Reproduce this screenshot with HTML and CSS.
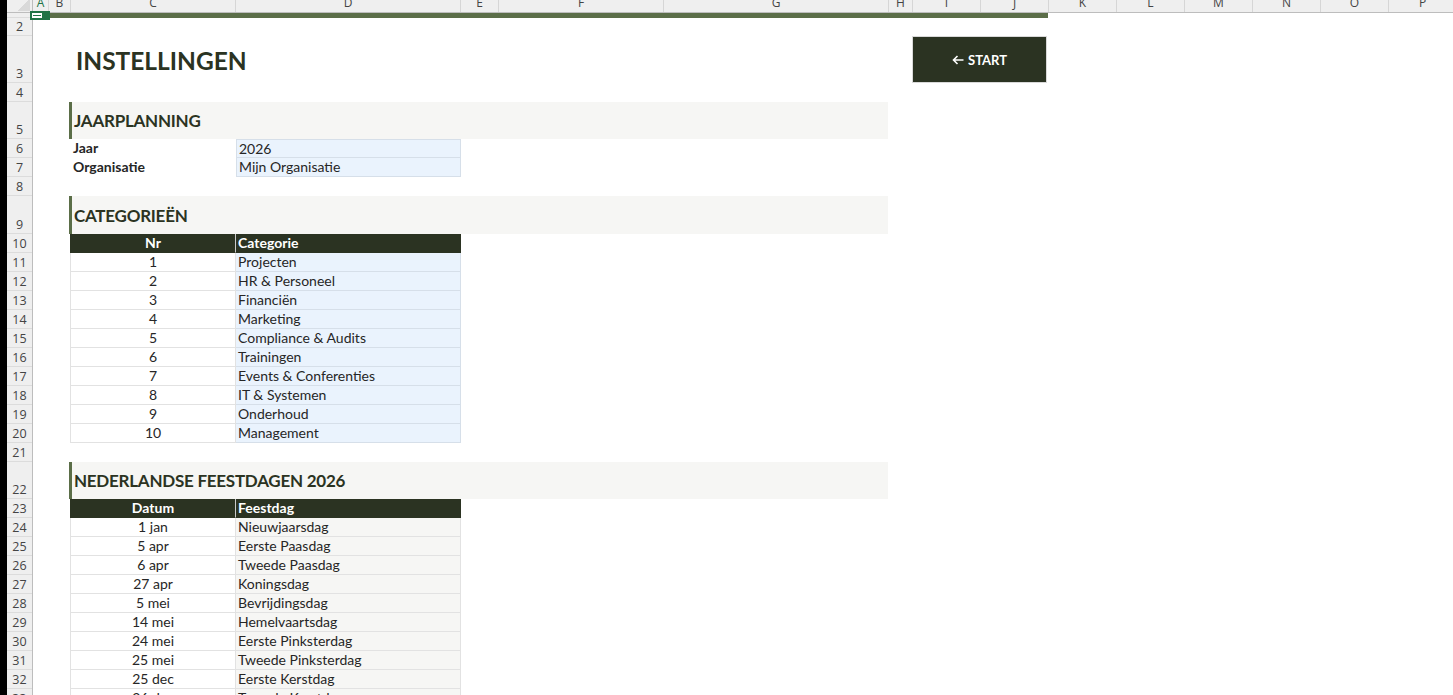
FILE: index.html
```html
<!DOCTYPE html>
<html lang="nl">

<head>
    <meta charset="UTF-8">
    <meta name="viewport" content="width=device-width, initial-scale=1.0">
    <title>Instellingen</title>
    <link rel="stylesheet" href="styles.css">
</head>

<body>
    <div class="edge"></div>
    <div class="app">
        <div class="cursor"><span></span></div>

        <div class="colheads">
            <div class="corner"></div>
            <div class="ch w-a sel">A</div>
            <div class="ch w-b">B</div>
            <div class="ch w-c">C</div>
            <div class="ch w-d">D</div>
            <div class="ch w-e">E</div>
            <div class="ch w-c">F</div>
            <div class="ch w-d">G</div>
            <div class="ch w-h">H</div>
            <div class="ch w-n">I</div>
            <div class="ch w-n">J</div>
            <div class="ch w-n">K</div>
            <div class="ch w-n">L</div>
            <div class="ch w-n">M</div>
            <div class="ch w-n">N</div>
            <div class="ch w-n">O</div>
            <div class="ch w-n">P</div>
        </div>

        <div class="sheet">
            <div class="rowheads">
                <div class="rh r5"></div>
                <div class="rh r18">2</div>
                <div class="rh r47">3</div>
                <div class="rh">4</div>
                <div class="rh r37">5</div>
                <div class="rh">6</div>
                <div class="rh">7</div>
                <div class="rh">8</div>
                <div class="rh r38">9</div>
                <div class="rh">10</div>
                <div class="rh">11</div>
                <div class="rh">12</div>
                <div class="rh">13</div>
                <div class="rh">14</div>
                <div class="rh">15</div>
                <div class="rh">16</div>
                <div class="rh">17</div>
                <div class="rh">18</div>
                <div class="rh">19</div>
                <div class="rh">20</div>
                <div class="rh">21</div>
                <div class="rh r37">22</div>
                <div class="rh">23</div>
                <div class="rh">24</div>
                <div class="rh">25</div>
                <div class="rh">26</div>
                <div class="rh">27</div>
                <div class="rh">28</div>
                <div class="rh">29</div>
                <div class="rh">30</div>
                <div class="rh">31</div>
                <div class="rh">32</div>
                <div class="rh">33</div>
            </div>

            <div class="canvas">
                <div class="topband"></div>
                <div class="gap r18"></div>

                <div class="titlerow">
                    <h1>INSTELLINGEN</h1>
                    <a class="btn" href="#">
                        <svg width="12" height="10" viewBox="0 0 12 10">
                            <path d="M5.5 1 L1.5 5 L5.5 9 M1.5 5 H11.5" fill="none" stroke="#fff" stroke-width="1.6" />
                        </svg>
                        START
                    </a>
                </div>

                <div class="gap"></div>

                <div class="section"><h2>JAARPLANNING</h2></div>
                <div class="form">
                    <div class="lbl">Jaar</div>
                    <div class="val first">2026</div>
                    <div class="lbl">Organisatie</div>
                    <div class="val">Mijn Organisatie</div>
                </div>

                <div class="gap"></div>

                <div class="section r38"><h2>CATEGORIEËN</h2></div>
                <div class="tbl">
                    <div class="hd n">Nr</div>
                    <div class="hd t">Categorie</div>
                    <div class="n">1</div><div class="t">Projecten</div>
                    <div class="n">2</div><div class="t">HR &amp; Personeel</div>
                    <div class="n">3</div><div class="t">Financiën</div>
                    <div class="n">4</div><div class="t">Marketing</div>
                    <div class="n">5</div><div class="t">Compliance &amp; Audits</div>
                    <div class="n">6</div><div class="t">Trainingen</div>
                    <div class="n">7</div><div class="t">Events &amp; Conferenties</div>
                    <div class="n">8</div><div class="t">IT &amp; Systemen</div>
                    <div class="n">9</div><div class="t">Onderhoud</div>
                    <div class="n">10</div><div class="t">Management</div>
                </div>

                <div class="gap"></div>

                <div class="section"><h2>NEDERLANDSE FEESTDAGEN 2026</h2></div>
                <div class="tbl days">
                    <div class="hd n">Datum</div>
                    <div class="hd t">Feestdag</div>
                    <div class="n">1 jan</div><div class="t">Nieuwjaarsdag</div>
                    <div class="n">5 apr</div><div class="t">Eerste Paasdag</div>
                    <div class="n">6 apr</div><div class="t">Tweede Paasdag</div>
                    <div class="n">27 apr</div><div class="t">Koningsdag</div>
                    <div class="n">5 mei</div><div class="t">Bevrijdingsdag</div>
                    <div class="n">14 mei</div><div class="t">Hemelvaartsdag</div>
                    <div class="n">24 mei</div><div class="t">Eerste Pinksterdag</div>
                    <div class="n">25 mei</div><div class="t">Tweede Pinksterdag</div>
                    <div class="n">25 dec</div><div class="t">Eerste Kerstdag</div>
                    <div class="n">26 dec</div><div class="t">Tweede Kerstdag</div>
                </div>
            </div>
        </div>
    </div>
</body>

</html>
```

FILE: styles.css
```css
* {
    box-sizing: border-box;
}

html,
body {
    margin: 0;
    height: 100%;
}

body {
    display: flex;
    overflow: hidden;
    background-color: #fff;
    font-family: Lato, "Liberation Sans", sans-serif;
    font-size: 14px;
    color: #262626;
}

.edge {
    width: 7px;
    flex-shrink: 0;
    background-color: #000;
}

.app {
    position: relative;
    flex: 1;
    display: flex;
    flex-direction: column;
    min-width: 0;
}

/* column letters */
.colheads {
    display: flex;
    height: 13px;
    flex-shrink: 0;
    overflow: hidden;
    background-color: #efefef;
    border-bottom: 1px solid #bdbdbd;
}

.corner {
    width: 26px;
    flex-shrink: 0;
    border-right: 1px solid #bdbdbd;
    background: linear-gradient(135deg, transparent 50%, #d9d9d9 50%) no-repeat right 2px bottom 1px / 13px 11px;
}

.ch {
    flex-shrink: 0;
    overflow: hidden;
    border-right: 1px solid #d6d6d6;
    text-align: center;
    font: 12px/6px "Open Sans", sans-serif;
    color: #444;
}

.ch.sel {
    color: #217346;
}

.w-a { width: 16px; }
.w-b { width: 22px; }
.w-c { width: 165px; }
.w-d { width: 225px; }
.w-e { width: 38px; }
.w-h { width: 24px; }
.w-n { width: 68px; }

.cursor {
    position: absolute;
    left: 23px;
    top: 11px;
    width: 20px;
    height: 9px;
    background-color: #217346;
}

.cursor span {
    position: absolute;
    left: 2px;
    top: 2px;
    width: 10px;
    height: 5px;
    background-color: #217346;
    border: 1px solid #fff;
    border-width: 2px 1px;
}

/* sheet */
.sheet {
    display: flex;
    flex: 1;
    min-height: 0;
}

.rowheads {
    width: 26px;
    flex-shrink: 0;
    background-color: #efefef;
    border-right: 1px solid #bdbdbd;
}

.rh {
    height: 19px;
    display: flex;
    align-items: flex-end;
    justify-content: center;
    overflow: hidden;
    padding-bottom: 1px;
    border-bottom: 1px solid #dcdcdc;
    font: 12.5px/15px "Open Sans", sans-serif;
    color: #444;
}

.r5 { height: 5px; padding: 0; }
.r18 { height: 18px; }
.r37 { height: 37px; }
.r38 { height: 38px; }
.r47 { height: 47px; }

.canvas {
    flex: 1;
    padding-left: 37px;
}

.topband {
    margin-left: -37px;
    width: 1015px;
    height: 5px;
    background-color: #5b6e48;
}

.gap {
    height: 19px;
}

.gap.r18 {
    height: 18px;
}

.titlerow {
    display: flex;
    height: 47px;
}

h1 {
    width: 842px;
    margin: 0;
    padding: 2px 0 0 6px;
    display: flex;
    align-items: center;
    font-size: 24.5px;
    font-weight: 700;
    color: #2b3322;
}

.btn {
    width: 135px;
    display: flex;
    align-items: center;
    justify-content: center;
    gap: 4px;
    background-color: #2b3322;
    border: 1px solid #d9d9d9;
    color: #fff;
    font-size: 13px;
    font-weight: 700;
    text-decoration: none;
}

.section {
    width: 819px;
    height: 37px;
    margin-left: -1px;
    display: flex;
    align-items: center;
    padding-left: 2px;
    background-color: #f6f6f4;
    border-left: 3px solid #5b6e48;
}

.section.r38 {
    height: 38px;
}

h2 {
    margin: 0;
    font-size: 17px;
    font-weight: 700;
    letter-spacing: -0.25px;
    color: #2b3322;
}

.form,
.tbl {
    display: grid;
    grid-template-columns: 166px 225px;
    grid-auto-rows: 19px;
    line-height: 18px;
}

.form .lbl {
    padding-left: 3px;
    font-weight: 700;
}

.form .val {
    padding-left: 2px;
    background-color: #eaf3fd;
    border: 1px solid #d6dfe9;
    border-top: none;
}

.form .val.first {
    border-top: 1px solid #d6dfe9;
}

.tbl .n {
    text-align: center;
    border: 1px solid #e2e2e2;
    border-top: none;
}

.tbl .t {
    padding-left: 2px;
    background-color: #eaf3fd;
    border-right: 1px solid #d6dfe9;
    border-bottom: 1px solid #d6dfe9;
}

.tbl .hd {
    background-color: #2b3322;
    color: #fff;
    font-weight: 700;
    border-color: #2b3322;
}

.tbl .hd.n {
    border-right-color: #c9c9c9;
}

.tbl.days .t {
    background-color: #f6f6f4;
    border-color: #e2e2e2;
}

.tbl.days .hd.t {
    background-color: #2b3322;
    border-color: #2b3322;
}
```
